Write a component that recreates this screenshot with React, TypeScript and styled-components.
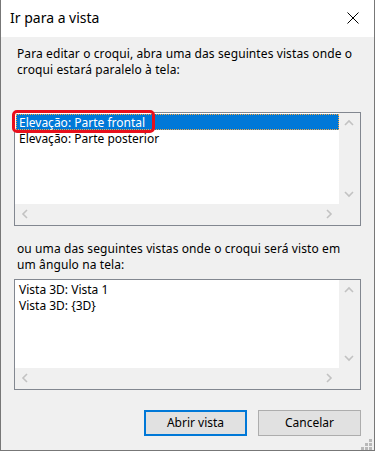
import React from "react";
import styled, { createGlobalStyle } from "styled-components";

const GlobalStyle = createGlobalStyle`
  html, body {
    margin: 0;
    padding: 0;
    background: #ffffff;
  }
  * {
    box-sizing: border-box;
  }
`;

const Window = styled.div`
  width: 375px;
  height: 451px;
  display: flex;
  flex-direction: column;
  background: #f0f0f0;
  border: 1px solid #777777;
  border-top: none;
  font-family: "Noto Sans", "Open Sans", sans-serif;
  font-size: 12px;
  color: #000000;
  position: relative;
  overflow: hidden;
`;

const TitleBar = styled.div`
  height: 37px;
  flex: none;
  background: #ffffff;
  display: flex;
  align-items: center;
  justify-content: space-between;
  padding: 0 14px 2px 9px;
`;

const Title = styled.div`
  font-size: 14px;
  color: #000000;
`;

const CloseButton = styled.div`
  width: 14px;
  height: 14px;
  display: flex;
  align-items: center;
  justify-content: center;
`;

const Body = styled.div`
  flex: 1;
  display: flex;
  flex-direction: column;
  padding: 0 13px 0 13px;
`;

const Text = styled.p<{ $top: number; $bottom: number }>`
  margin: ${(p) => p.$top}px 0 ${(p) => p.$bottom}px 3px;
  line-height: 16px;
  letter-spacing: 0.1px;
`;

const ListBox = styled.div<{ $height: number }>`
  height: ${(p) => p.$height}px;
  border: 1px solid #828790;
  display: grid;
  grid-template-columns: 1fr 21px;
  grid-template-rows: 1fr 21px;
  background: #f0f0f0;
`;

const ListArea = styled.div`
  background: #ffffff;
  padding: 1px 0 0 1px;
  display: flex;
  flex-direction: column;
`;

const Item = styled.div<{ $selected?: boolean }>`
  height: 16px;
  line-height: 15px;
  padding-left: 2px;
  white-space: nowrap;
  position: relative;
  background: ${(p) => (p.$selected ? "#0078d7" : "transparent")};
  color: ${(p) => (p.$selected ? "#ffffff" : "#000000")};
  border: 1px ${(p) => (p.$selected ? "dotted #f5a742" : "solid transparent")};
`;

const Highlight = styled.span`
  position: absolute;
  left: -5px;
  top: -5px;
  width: 143px;
  height: 23px;
  border: 3px solid #e8101c;
  border-radius: 5px;
  pointer-events: none;
`;

const VScroll = styled.div`
  display: flex;
  flex-direction: column;
  justify-content: space-between;
  background: #f0f0f0;
`;

const HScroll = styled.div`
  display: flex;
  justify-content: space-between;
  background: #f0f0f0;
`;

const ArrowButton = styled.div`
  width: 20px;
  height: 20px;
  display: flex;
  align-items: center;
  justify-content: center;
  flex: none;
`;

const Corner = styled.div`
  background: #f0f0f0;
`;

const ButtonRow = styled.div`
  display: flex;
  justify-content: flex-end;
  gap: 11px;
  margin-top: 20px;
`;

const Button = styled.div<{ $default?: boolean }>`
  width: 103px;
  height: 26px;
  display: flex;
  align-items: center;
  justify-content: center;
  background: #e1e1e1;
  border: ${(p) => (p.$default ? "2px solid #0078d7" : "1px solid #adadad")};
  padding-bottom: 1px;
`;

const Grip = styled.div`
  position: absolute;
  right: 2px;
  bottom: 2px;
  width: 11px;
  height: 11px;
`;

const Chevron = ({ dir }: { dir: "up" | "down" | "left" | "right" }) => {
  const paths = {
    up: "M1 6 L5 2 L9 6",
    down: "M1 2 L5 6 L9 2",
    left: "M6 1 L2 5 L6 9",
    right: "M2 1 L6 5 L2 9",
  };
  const vertical = dir === "up" || dir === "down";
  return (
    <svg
      width={vertical ? 10 : 8}
      height={vertical ? 8 : 10}
      viewBox={vertical ? "0 0 10 8" : "0 0 8 10"}
    >
      <path d={paths[dir]} fill="none" stroke="#c2c2c2" strokeWidth="1.6" />
    </svg>
  );
};

const List = ({
  height,
  items,
  selected,
}: {
  height: number;
  items: string[];
  selected?: number;
}) => (
  <ListBox $height={height}>
    <ListArea>
      {items.map((it, i) => (
        <Item key={it} $selected={i === selected}>
          {it}
          {i === selected && <Highlight />}
        </Item>
      ))}
    </ListArea>
    <VScroll>
      <ArrowButton>
        <Chevron dir="up" />
      </ArrowButton>
      <ArrowButton>
        <Chevron dir="down" />
      </ArrowButton>
    </VScroll>
    <HScroll>
      <ArrowButton>
        <Chevron dir="left" />
      </ArrowButton>
      <ArrowButton>
        <Chevron dir="right" />
      </ArrowButton>
    </HScroll>
    <Corner />
  </ListBox>
);

export default function App() {
  return (
    <Window>
      <GlobalStyle />
      <TitleBar>
        <Title>Ir para a vista</Title>
        <CloseButton>
          <svg width="12" height="12" viewBox="0 0 12 12">
            <path d="M0.5 0.5 L11.5 11.5 M11.5 0.5 L0.5 11.5" stroke="#000" strokeWidth="1" />
          </svg>
        </CloseButton>
      </TitleBar>
      <Body>
        <Text $top={9} $bottom={34}>
          Para editar o croqui, abra uma das seguintes vistas onde o croqui estará paralelo à tela:
        </Text>
        <List
          height={114}
          items={["Elevação: Parte frontal", "Elevação: Parte posterior"]}
          selected={0}
        />
        <Text $top={15} $bottom={6}>
          ou uma das seguintes vistas onde o croqui será visto em um ângulo na tela:
        </Text>
        <List height={111} items={["Vista 3D: Vista 1", "Vista 3D: {3D}"]} />
        <ButtonRow>
          <Button $default>Abrir vista</Button>
          <Button>Cancelar</Button>
        </ButtonRow>
      </Body>
      <Grip>
        <svg width="11" height="11" viewBox="0 0 11 11">
          <g fill="#b9b9b9">
            <rect x="8" y="0" width="3" height="3" />
            <rect x="4" y="4" width="3" height="3" />
            <rect x="8" y="4" width="3" height="3" />
            <rect x="0" y="8" width="3" height="3" />
            <rect x="4" y="8" width="3" height="3" />
            <rect x="8" y="8" width="3" height="3" />
          </g>
        </svg>
      </Grip>
    </Window>
  );
}
